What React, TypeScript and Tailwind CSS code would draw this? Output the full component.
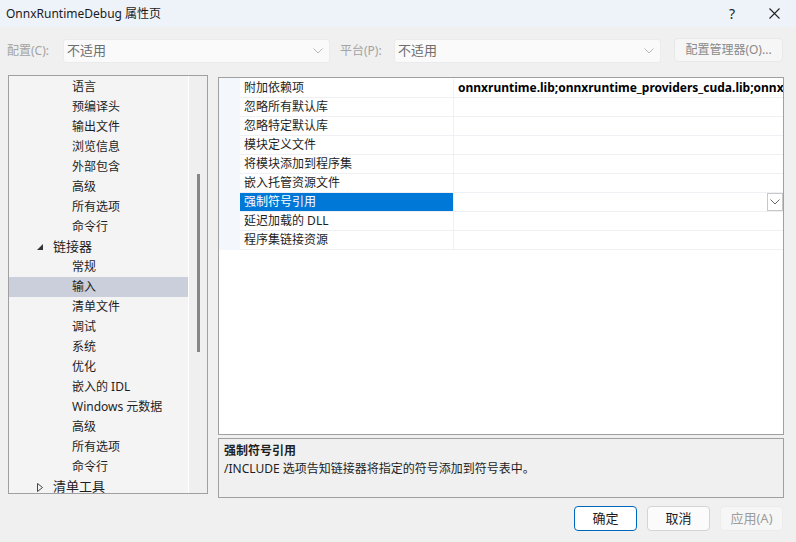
import React from "react";

const FONT = '"Noto Sans", "Noto Sans CJK SC", sans-serif';

const treeItems: { label: string; level: 0 | 1; expander?: "open" | "closed"; selected?: boolean }[] = [
  { label: "语言", level: 1 },
  { label: "预编译头", level: 1 },
  { label: "输出文件", level: 1 },
  { label: "浏览信息", level: 1 },
  { label: "外部包含", level: 1 },
  { label: "高级", level: 1 },
  { label: "所有选项", level: 1 },
  { label: "命令行", level: 1 },
  { label: "链接器", level: 0, expander: "open" },
  { label: "常规", level: 1 },
  { label: "输入", level: 1, selected: true },
  { label: "清单文件", level: 1 },
  { label: "调试", level: 1 },
  { label: "系统", level: 1 },
  { label: "优化", level: 1 },
  { label: "嵌入的 IDL", level: 1 },
  { label: "Windows 元数据", level: 1 },
  { label: "高级", level: 1 },
  { label: "所有选项", level: 1 },
  { label: "命令行", level: 1 },
  { label: "清单工具", level: 0, expander: "closed" },
];

const props: { name: string; value?: string; selected?: boolean }[] = [
  { name: "附加依赖项", value: "onnxruntime.lib;onnxruntime_providers_cuda.lib;onnx" },
  { name: "忽略所有默认库" },
  { name: "忽略特定默认库" },
  { name: "模块定义文件" },
  { name: "将模块添加到程序集" },
  { name: "嵌入托管资源文件" },
  { name: "强制符号引用", selected: true },
  { name: "延迟加载的 DLL" },
  { name: "程序集链接资源" },
];

function Chevron({ className }: { className?: string }) {
  return (
    <svg width="10" height="6" viewBox="0 0 10 6" fill="none" className={className}>
      <path d="M0.5 0.5L5 5L9.5 0.5" stroke="currentColor" strokeWidth="1" />
    </svg>
  );
}

function Combo() {
  return (
    <div className="w-[267px] h-6 rounded-[3px] bg-[#fafafa] border border-[#ebebeb] flex items-center justify-between pl-[3px] pr-[6px] text-[13px] text-[#6e6e6e]">
      <span>不适用</span>
      <Chevron className="text-[#b8b8b8]" />
    </div>
  );
}

export default function App() {
  return (
    <div
      className="w-[796px] h-[542px] bg-[#f0f0f0] flex flex-col overflow-hidden relative"
      style={{ fontFamily: FONT }}
    >
      {/* title bar */}
      <div className="h-[27px] shrink-0 bg-[#eef2f9] flex items-center justify-between pl-[6px] pr-[16px] text-[12px] text-[#1b1b1b]">
        <span>OnnxRuntimeDebug 属性页</span>
        <div className="flex items-center gap-[34px]">
          <span className="text-[14px] text-[#222]">?</span>
          <svg width="11" height="11" viewBox="0 0 11 11">
            <path d="M0.5 0.5L10.5 10.5M10.5 0.5L0.5 10.5" stroke="#222" strokeWidth="1.1" />
          </svg>
        </div>
      </div>

      {/* configuration row */}
      <div className="h-[48px] shrink-0 pt-[12px] flex items-start text-[12px]">
        <span className="w-[63px] shrink-0 pl-[7px] pt-[3px] text-[#a3a3a3]">配置(C):</span>
        <Combo />
        <span className="w-[64px] shrink-0 pl-[10px] pt-[3px] text-[#a3a3a3]">平台(P):</span>
        <Combo />
        <div className="ml-[13px] -mt-px w-[109px] h-6 rounded-[4px] bg-[#f6f6f6] border border-[#e8e8e8] flex items-center justify-center text-[12px] text-[#8a8a8a]">
          配置管理器(O)...
        </div>
      </div>

      {/* main area */}
      <div className="flex gap-[10px] pl-[8px]">
        {/* tree */}
        <div className="w-[200px] h-[419px] shrink-0 border border-[#a0a0a0] bg-[#f4f4f4] flex overflow-hidden">
          <div className="w-[179px] shrink-0 pt-px text-[12px] text-[#1e1e1e]">
            {treeItems.map((it, i) => (
              <div key={i} className={`h-5 flex items-center ${it.selected ? "bg-[#cbcfdb]" : ""}`}>
                {it.level === 0 ? (
                  <div className="flex items-center">
                    <span className="w-[28px]" />
                    <span className="w-[16px] flex justify-start">
                      {it.expander === "open" ? (
                        <svg width="6" height="6" viewBox="0 0 6 6">
                          <path d="M6 0L6 6L0 6Z" fill="#333" />
                        </svg>
                      ) : (
                        <svg width="6" height="9" viewBox="0 0 6 9">
                          <path d="M0.5 0.5L5.5 4.5L0.5 8.5Z" fill="none" stroke="#444" strokeWidth="1" />
                        </svg>
                      )}
                    </span>
                    <span className="text-[13px]">{it.label}</span>
                  </div>
                ) : (
                  <span className="pl-[63px]">{it.label}</span>
                )}
              </div>
            ))}
          </div>
          <div className="w-px shrink-0 bg-white" />
          <div className="flex-1 bg-[#efefef] pl-[8px] pt-[98px]">
            <div className="w-[3px] h-[178px] bg-[#868686]" />
          </div>
        </div>

        {/* right column */}
        <div className="flex flex-col">
          <div className="w-[566px] h-[358px] mt-[2px] border border-[#a0a0a0] bg-white overflow-hidden">
            <div className="h-px w-[21px] bg-[#f4f7fc]" />
            <div className="text-[12px] text-[#1e1e1e]">
              {props.map((p, i) => (
                <div key={i} className="h-[19px] flex">
                  <div className="w-[21px] shrink-0 bg-[#f4f7fc]" />
                  <div className="flex-1 min-w-0 flex border-b border-[#eef0f3]">
                    <div
                      className={`w-[214px] shrink-0 flex items-center pl-[4px] border-r border-[#eef0f3] ${
                        p.selected ? "bg-[#0078d7] text-white" : ""
                      }`}
                    >
                      {p.name}
                    </div>
                    <div className="flex-1 min-w-0 flex items-center justify-between pl-[4px] overflow-hidden whitespace-nowrap">
                      {p.value ? <span className="font-bold text-black">{p.value}</span> : <span />}
                      {p.selected && (
                        <div className="w-[16px] h-[18px] border border-[#c8c8c8] bg-white flex items-center justify-center shrink-0">
                          <Chevron className="text-[#6a6a6a]" />
                        </div>
                      )}
                    </div>
                  </div>
                </div>
              ))}
            </div>
          </div>
          <div className="w-[566px] h-[60px] mt-[3px] border border-[#a0a0a0] bg-[#f0f0f0] pl-[5px] pt-[3px] text-[12px] text-[#1e1e1e] leading-[18px]">
            <div className="font-bold">强制符号引用</div>
            <div>/INCLUDE 选项告知链接器将指定的符号添加到符号表中。</div>
          </div>
        </div>
      </div>

      {/* buttons */}
      <div className="flex justify-end gap-[10px] pr-[13px] mt-[8px] text-[13px]">
        <div className="w-[63px] h-[25px] rounded-[4px] border border-[#0067c0] bg-white flex items-center justify-center text-[#1b1b1b]">
          确定
        </div>
        <div className="w-[63px] h-[25px] rounded-[4px] border border-[#d4d4d4] bg-[#fbfbfb] flex items-center justify-center text-[#1b1b1b]">
          取消
        </div>
        <div className="w-[63px] h-[25px] rounded-[4px] border border-[#ececec] bg-[#f6f6f6] flex items-center justify-center text-[#9d9d9d]">
          应用(A)
        </div>
      </div>
    </div>
  );
}
